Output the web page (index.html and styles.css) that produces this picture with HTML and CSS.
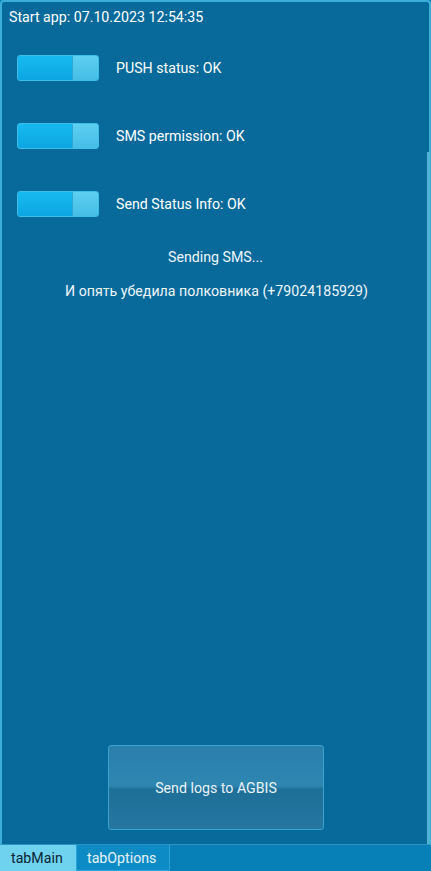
FILE: index.html
```html
<!DOCTYPE html>
<html lang="ru">
<head>
    <meta charset="UTF-8">
    <meta name="viewport" content="width=device-width, initial-scale=1.0">
    <title>AGBIS SMS</title>
    <link rel="stylesheet" href="styles.css">
</head>
<body>
    <div class="app">
        <div class="panel">
            <div class="start-line">Start app: 07.10.2023 12:54:35</div>

            <div class="status-list">
                <div class="status-row">
                    <div class="switch"><div class="switch-thumb"></div></div>
                    <div class="status-label">PUSH status: OK</div>
                </div>
                <div class="status-row">
                    <div class="switch"><div class="switch-thumb"></div></div>
                    <div class="status-label">SMS permission: OK</div>
                </div>
                <div class="status-row">
                    <div class="switch"><div class="switch-thumb"></div></div>
                    <div class="status-label">Send Status Info: OK</div>
                </div>
            </div>

            <div class="sending">Sending SMS...</div>
            <div class="message">И опять убедила полковника (+79024185929)</div>

            <div class="spacer"></div>

            <div class="button-wrap">
                <div class="send-button">Send logs to AGBIS</div>
            </div>

            <div class="scrollbar"></div>
        </div>

        <!-- вкладки -->
        <div class="tabs">
            <div class="tab active">tabMain</div>
            <div class="tab">tabOptions</div>
        </div>
    </div>
</body>
</html>
```

FILE: styles.css
```css
* {
    margin: 0;
    padding: 0;
    box-sizing: border-box;
}

body {
    font-family: Roboto, 'Noto Sans', sans-serif;
    width: 431px;
    height: 871px;
    overflow: hidden;
    background: #0780b8;
    color: #ffffff;
}

.app {
    width: 431px;
    height: 871px;
    display: flex;
    flex-direction: column;
}

.panel {
    position: relative;
    flex: 1;
    display: flex;
    flex-direction: column;
    background: #086a9a;
    border: 2px solid #3aaed6;
    border-bottom: 1px solid #2b94c2;
    border-radius: 4px 4px 0 0;
}

.start-line {
    font-size: 14.2px;
    padding: 7px 0 0 7px;
    height: 26px;
}

.status-list {
    display: flex;
    flex-direction: column;
    gap: 42px;
    padding: 27px 0 0 15px;
}

.status-row {
    display: flex;
    align-items: center;
    gap: 17px;
}

.switch {
    width: 82px;
    height: 26px;
    border-radius: 3px;
    background: linear-gradient(180deg, #17baf0 0%, #0ca6e2 100%);
    border: 1px solid #3fbdea;
    display: flex;
    justify-content: flex-end;
    overflow: hidden;
}

.switch-thumb {
    width: 26px;
    height: 100%;
    background: linear-gradient(180deg, #5dd0f0 0%, #45bde6 100%);
    border-left: 1px solid #2da7d8;
}

.status-label {
    font-size: 14.2px;
}

.sending {
    text-align: center;
    font-size: 14.2px;
    margin-top: 32px;
    color: #eef6fa;
}

.message {
    text-align: center;
    font-size: 14.2px;
    margin-top: 18px;
    padding-left: 2px;
    color: #eef6fa;
}

.spacer {
    flex: 1;
}

.button-wrap {
    display: flex;
    padding-left: 106px;
    margin-bottom: 14px;
}

.send-button {
    width: 216px;
    height: 85px;
    display: flex;
    align-items: center;
    justify-content: center;
    font-size: 14.2px;
    color: #eaf3f8;
    border: 1px solid #3aa3cf;
    border-radius: 3px;
    background: linear-gradient(180deg, #2a7fab 0%, #2e86b1 48%, #1e6f98 52%, #2576a0 100%);
}

.scrollbar {
    position: absolute;
    right: -1px;
    top: 150px;
    bottom: 0;
    width: 3px;
    background: #4fb3d6;
}

.tabs {
    height: 26px;
    display: flex;
    background: #0780b8;
}

.tab {
    font-size: 14.2px;
    padding: 0 10px;
    display: flex;
    align-items: center;
    background: #0c8bc4;
    border: 1px solid #2aa6d8;
    border-top: none;
    color: #e6f3f9;
}

.tab.active {
    width: 76px;
    background: #6fd3f0;
    border-color: #6fd3f0;
    color: #0b2433;
}

.tab + .tab {
    width: 94px;
}
```
